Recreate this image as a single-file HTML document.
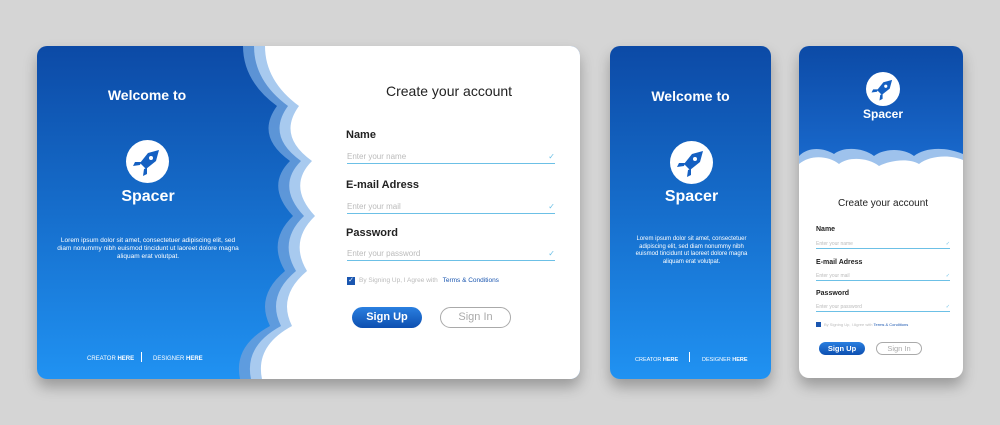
<!DOCTYPE html>
<html><head><style>
*{margin:0;padding:0;box-sizing:border-box}
body{width:1000px;height:425px;background:#d5d5d5;font-family:"Liberation Sans",sans-serif;position:relative;overflow:hidden}
.card{position:absolute;border-radius:10px;overflow:hidden;box-shadow:0 8px 14px rgba(0,0,0,.28)}
.blue{background:linear-gradient(#0c4aa6,#2092f2)}
.abs{position:absolute}
.w{color:#fff;text-align:center}
.lbl{position:absolute;color:#222;font-weight:bold}
.inp{position:absolute;color:#bbb;border-bottom:1.5px solid #6cc0e6}
.chk{position:absolute;right:0;color:#6cc0e6}
.btn{position:absolute;border-radius:20px;text-align:center;font-weight:bold}
</style></head><body>

<!-- Card 1 -->
<div class="card blue" style="left:37px;top:46px;width:543px;height:333px">
  <svg class="abs" style="left:0;top:0" width="543" height="333" viewBox="0 0 543 333">
    <g transform="translate(-22,0)"><path d="M228 0 Q228 35 262 60 Q240 90 275 115 Q250 140 278 170 Q252 195 270 225 Q240 250 255 280 Q218 300 225 333 L565 333 L565 0 Z" fill="#6a9fdc" opacity=".85"/></g>
    <g transform="translate(-11,0)"><path d="M228 0 Q228 35 262 60 Q240 90 275 115 Q250 140 278 170 Q252 195 270 225 Q240 250 255 280 Q218 300 225 333 L565 333 L565 0 Z" fill="#a8caef"/></g>
    <path d="M228 0 Q228 35 262 60 Q240 90 275 115 Q250 140 278 170 Q252 195 270 225 Q240 250 255 280 Q218 300 225 333 L543 333 L543 0 Z" fill="#fff"/>
  </svg>
  <div class="abs w" style="left:0;width:220px;top:41px;font-size:14px;font-weight:bold">Welcome to</div>
  <div class="abs" style="left:89px;top:94px;width:43px;height:43px;border-radius:50%;background:#fff">
    <svg width="43" height="43" viewBox="0 0 43 43"><path d="M33 10 L22 13 L14 23 L20 29 L30 21Z" fill="#1560c2"/><path d="M15 22 L9 22 L7 26 L14 25Z M21 28 L21 34 L17 36 L18 29Z" fill="#1560c2"/><circle cx="25" cy="18" r="2" fill="#fff"/></svg>
  </div>
  <div class="abs w" style="left:0;width:222px;top:142px;font-size:16px;font-weight:bold">Spacer</div>
  <div class="abs w" style="left:18px;width:186px;top:191px;font-size:6.5px;line-height:8px">Lorem ipsum dolor sit amet, consectetuer adipiscing elit, sed diam nonummy nibh euismod tincidunt ut laoreet dolore magna aliquam erat volutpat.</div>
  <div class="abs" style="left:50px;top:310px;font-size:6px;color:#fff">CREATOR <b>HERE</b></div>
  <div class="abs" style="left:104px;top:306px;width:1px;height:10px;background:#fff"></div>
  <div class="abs" style="left:116px;top:310px;font-size:6px;color:#fff">DESIGNER <b>HERE</b></div>

  <div class="abs" style="left:349px;top:37px;font-size:14px;color:#222">Create your account</div>
  <div class="lbl" style="left:309px;top:83px;font-size:11px">Name</div>
  <div class="inp" style="left:310px;top:106px;width:208px;font-size:8px;height:12px">Enter your name<span class="chk">✓</span></div>
  <div class="lbl" style="left:309px;top:133px;font-size:11px">E-mail Adress</div>
  <div class="inp" style="left:310px;top:156px;width:208px;font-size:8px;height:12px">Enter your mail<span class="chk">✓</span></div>
  <div class="lbl" style="left:309px;top:181px;font-size:11px">Password</div>
  <div class="inp" style="left:310px;top:203px;width:208px;font-size:8px;height:12px">Enter your password<span class="chk">✓</span></div>
  <div class="abs" style="left:310px;top:231px;width:8px;height:8px;background:#1a56b0;color:#fff;font-size:7px;line-height:8px;text-align:center">✓</div>
  <div class="abs" style="left:322px;top:231px;font-size:6.5px;color:#bbb">By Signing Up, I Agree with <span style="color:#1a56b0;margin-left:3px">Terms &amp; Conditions</span></div>
  <div class="btn" style="left:315px;top:261px;width:70px;height:21px;background:linear-gradient(#2a7fe0,#0d4fb0);color:#fff;font-size:11px;line-height:21px">Sign Up</div>
  <div class="btn" style="left:403px;top:261px;width:71px;height:21px;border:1.5px solid #aaa;color:#aaa;font-size:11px;line-height:18px;font-weight:normal">Sign In</div>
</div>

<!-- Card 2 -->
<div class="card blue" style="left:610px;top:46px;width:161px;height:333px">
  <div class="abs w" style="left:0;width:161px;top:42px;font-size:14px;font-weight:bold">Welcome to</div>
  <div class="abs" style="left:60px;top:95px;width:43px;height:43px;border-radius:50%;background:#fff">
    <svg width="43" height="43" viewBox="0 0 43 43"><path d="M33 10 L22 13 L14 23 L20 29 L30 21Z" fill="#1560c2"/><path d="M15 22 L9 22 L7 26 L14 25Z M21 28 L21 34 L17 36 L18 29Z" fill="#1560c2"/><circle cx="25" cy="18" r="2" fill="#fff"/></svg>
  </div>
  <div class="abs w" style="left:0;width:163px;top:142px;font-size:16px;font-weight:bold">Spacer</div>
  <div class="abs w" style="left:18px;width:127px;top:190px;font-size:6px;line-height:7.5px">Lorem ipsum dolor sit amet, consectetuer adipiscing elit, sed diam nonummy nibh euismod tincidunt ut laoreet dolore magna aliquam erat volutpat.</div>
  <div class="abs" style="left:25px;top:311px;font-size:5.5px;color:#fff">CREATOR <b>HERE</b></div>
  <div class="abs" style="left:79px;top:306px;width:1px;height:10px;background:#fff"></div>
  <div class="abs" style="left:92px;top:311px;font-size:5.5px;color:#fff">DESIGNER <b>HERE</b></div>
</div>

<!-- Card 3 -->
<div class="card" style="left:799px;top:46px;width:164px;height:332px;background:#fff">
  <div class="abs blue" style="left:0;top:0;width:164px;height:125px;background:linear-gradient(#0c4aa6,#1a6cd0)"></div>
  <svg class="abs" style="left:0;top:100px" width="164" height="40" viewBox="0 0 164 40">
    <path d="M0 10 C10 0 25 2 35 8 C45 0 65 2 75 10 C85 2 105 2 115 10 C125 2 145 0 164 8 L164 40 L0 40Z" fill="#9ec2ec"/>
    <path d="M0 18 C12 8 30 10 40 18 C50 10 70 12 80 20 C92 14 110 12 120 18 C130 10 150 8 164 14 L164 40 L0 40Z" fill="#fff"/>
  </svg>
  <div class="abs" style="left:67px;top:26px;width:34px;height:34px;border-radius:50%;background:#fff">
    <svg width="34" height="34" viewBox="0 0 43 43"><path d="M33 10 L22 13 L14 23 L20 29 L30 21Z" fill="#1560c2"/><path d="M15 22 L9 22 L7 26 L14 25Z M21 28 L21 34 L17 36 L18 29Z" fill="#1560c2"/><circle cx="25" cy="18" r="2" fill="#fff"/></svg>
  </div>
  <div class="abs w" style="left:0;width:168px;top:61px;font-size:12px;font-weight:bold">Spacer</div>
  <div class="abs" style="left:39px;top:152px;font-size:10px;color:#222">Create your account</div>
  <div class="lbl" style="left:17px;top:180px;font-size:7px">Name</div>
  <div class="inp" style="left:17px;top:195px;width:134px;font-size:5px;height:8px">Enter your name<span class="chk">✓</span></div>
  <div class="lbl" style="left:17px;top:213px;font-size:7px">E-mail Adress</div>
  <div class="inp" style="left:17px;top:227px;width:134px;font-size:5px;height:8px">Enter your mail<span class="chk">✓</span></div>
  <div class="lbl" style="left:17px;top:244px;font-size:7px">Password</div>
  <div class="inp" style="left:17px;top:258px;width:134px;font-size:5px;height:8px">Enter your password<span class="chk">✓</span></div>
  <div class="abs" style="left:17px;top:276px;width:5px;height:5px;background:#1a56b0"></div>
  <div class="abs" style="left:25px;top:276px;font-size:4px;color:#bbb">By Signing Up, I Agree with <span style="color:#1a56b0">Terms &amp; Conditions</span></div>
  <div class="btn" style="left:20px;top:296px;width:46px;height:13px;background:linear-gradient(#2a7fe0,#0d4fb0);color:#fff;font-size:7.5px;line-height:13px">Sign Up</div>
  <div class="btn" style="left:77px;top:296px;width:46px;height:13px;border:1px solid #aaa;color:#aaa;font-size:7.5px;line-height:11px;font-weight:normal">Sign In</div>
</div>
</body></html>
